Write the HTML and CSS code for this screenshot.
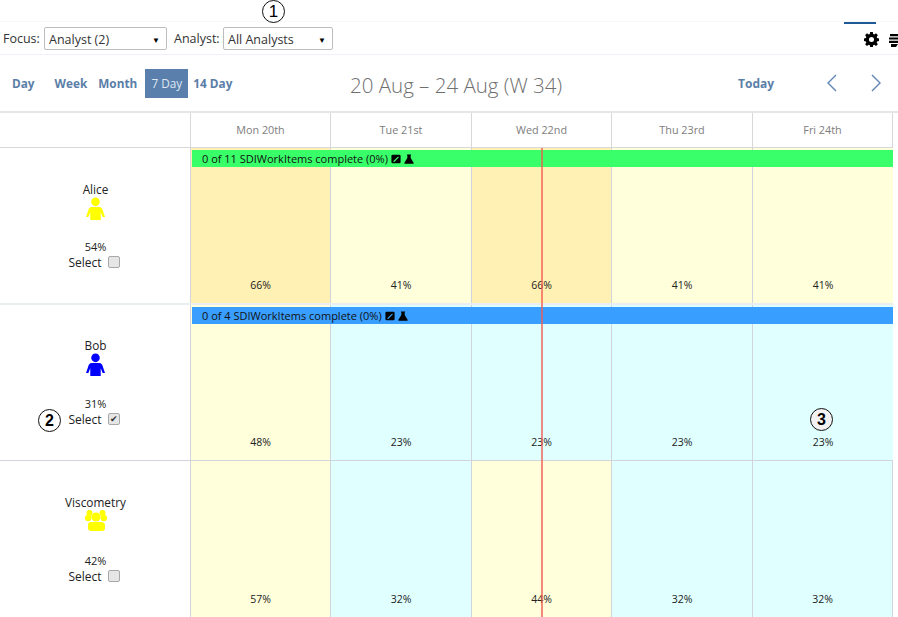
FILE: index.html
```html
<!DOCTYPE html>
<html lang="en">
<head>
<meta charset="utf-8">
<title>Schedule</title>
<link rel="stylesheet" href="styles.css">
</head>
<body>
<div class="page">
  <div class="topbar">
    <span class="callout callout-one">1</span>
    <span class="tab-mark"></span>
  </div>
  <div class="toolbar">
    <div class="filters">
      <span class="flabel">Focus:</span>
      <span class="sel sel-focus"><span>Analyst (2)</span><i>▼</i></span>
      <span class="flabel flabel-gap">Analyst:</span>
      <span class="sel sel-analyst"><span>All Analysts</span><i>▼</i></span>
    </div>
    <div class="tools">
      <svg class="gear" viewBox="0 0 16 16"><path fill="#000" fill-rule="evenodd" d="M6.600 0h2.800l.4 2.200 1.200.5L12.800 1.400l2 2-1.300 1.800.5 1.200 2 .4v2.800l-2 .4-.5 1.200 1.300 1.800-2 2-1.800-1.300-1.200.5-.4 2H6.600l-.4-2-1.200-.5-1.800 1.300-2-2 1.300-1.800-.5-1.200-2-.4V6.800l2-.4.5-1.200L1.200 3.400l2-2L5 2.700l1.200-.5zM8 5.300a2.700 2.700 0 1 0 0 5.400 2.700 2.700 0 0 0 0-5.400z"/></svg>
      <svg class="list" viewBox="0 0 14 14"><path fill="#000" d="M1 1h13v2.200H1zM0 4.400h14v2.200H0zM0 7.800h14V10H0zM2 11h7l-2 3H2z"/></svg>
    </div>
  </div>
  <div class="nav">
    <div class="views">
      <a class="view view-day">Day</a>
      <a class="view view-week">Week</a>
      <a class="view view-month">Month</a>
      <a class="view view-on">7 Day</a>
      <a class="view view-14">14 Day</a>
    </div>
    <div class="range">20 Aug – 24 Aug (W 34)</div>
    <div class="pager">
      <a class="today">Today</a>
      <svg class="chev" viewBox="0 0 12 18"><path d="M10 1 2 9l8 8" fill="none" stroke="#5f86b5" stroke-width="1.400"/></svg>
      <svg class="chev" viewBox="0 0 12 18"><path d="M2 1l8 8-8 8" fill="none" stroke="#5f86b5" stroke-width="1.400"/></svg>
    </div>
  </div>
  <div class="cal">
    <div class="head">
      <div class="hcell hcell-blank"></div>
      <div class="hcell">Mon 20th</div>
      <div class="hcell">Tue 21st</div>
      <div class="hcell">Wed 22nd</div>
      <div class="hcell">Thu 23rd</div>
      <div class="hcell">Fri 24th</div>
    </div>
    <div class="row row-a">
      <div class="who">
        <div class="name">Alice</div>
        <svg class="person" viewBox="0 0 20 24"><circle cx="10" cy="5" r="4.500" fill="#ffff00"/><path fill="#ffff00" d="M6 10.500h8c2 0 3 1.500 3.500 3l2.500 7.500h-2.500L15.500 16v8h-11v-8L2.500 21H0l2.500-7.500c.5-1.500 1.500-3 3.500-3z"/></svg>
        <div class="pct">54%</div>
        <label class="pick">Select<span class="box"></span></label>
      </div>
      <div class="day d-orange"><span>66%</span></div>
      <div class="day d-yellow"><span>41%</span></div>
      <div class="day d-orange"><span>66%</span></div>
      <div class="day d-yellow"><span>41%</span></div>
      <div class="day d-yellow"><span>41%</span></div>
      <div class="bar bar-green"><span>0 of 11 SDIWorkItems complete (0%)</span>
        <svg class="ico" viewBox="0 0 12 12"><path fill="#000" fill-rule="evenodd" d="M2 1h8a1.500 1.500 0 0 1 1.500 1.500v7A1.500 1.500 0 0 1 10 11H2A1.500 1.500 0 0 1 .5 9.500v-7A1.500 1.500 0 0 1 2 1zm6.500 2L3 8.500V9.500h1L9.500 4z"/></svg>
        <svg class="ico" viewBox="0 0 12 12"><path fill="#000" d="M3.500.5h5v1H8v3.200l3.500 5.800c.3.600 0 1.200-.7 1.200H1.200c-.7 0-1-.6-.7-1.200L4 4.700V1.500h-.5z"/></svg>
      </div>
    </div>
    <div class="row row-b">
      <div class="who">
        <div class="name">Bob</div>
        <svg class="person" viewBox="0 0 20 24"><circle cx="10" cy="5" r="4.500" fill="#0000ff"/><path fill="#0000ff" d="M6 10.500h8c2 0 3 1.500 3.500 3l2.500 7.500h-2.500L15.500 16v8h-11v-8L2.500 21H0l2.500-7.500c.5-1.500 1.500-3 3.500-3z"/></svg>
        <div class="pct">31%</div>
        <label class="pick">Select<span class="box box-on">✔</span></label>
        <span class="callout callout-two">2</span>
      </div>
      <div class="day d-yellow"><span>48%</span></div>
      <div class="day d-cyan"><span>23%</span></div>
      <div class="day d-cyan"><span>23%</span></div>
      <div class="day d-cyan"><span>23%</span></div>
      <div class="day d-cyan"><span>23%</span><b class="callout callout-three">3</b></div>
      <div class="bar bar-blue"><span>0 of 4 SDIWorkItems complete (0%)</span>
        <svg class="ico" viewBox="0 0 12 12"><path fill="#000" fill-rule="evenodd" d="M2 1h8a1.500 1.500 0 0 1 1.500 1.500v7A1.500 1.500 0 0 1 10 11H2A1.500 1.500 0 0 1 .5 9.500v-7A1.500 1.500 0 0 1 2 1zm6.500 2L3 8.500V9.500h1L9.500 4z"/></svg>
        <svg class="ico" viewBox="0 0 12 12"><path fill="#000" d="M3.500.5h5v1H8v3.200l3.500 5.800c.3.600 0 1.200-.7 1.200H1.200c-.7 0-1-.6-.7-1.200L4 4.700V1.500h-.5z"/></svg>
      </div>
    </div>
    <div class="row row-c">
      <div class="who">
        <div class="name">Viscometry</div>
        <svg class="person" viewBox="0 0 22 21"><g fill="#ffff00"><circle cx="4.500" cy="3" r="3"/><circle cx="17.500" cy="3" r="3"/><circle cx="3.200" cy="8" r="3.200"/><circle cx="18.800" cy="8" r="3.200"/><circle cx="11" cy="7" r="4.500"/><path d="M6 12h10c2 0 4 1 4 3v3c0 1.700-1.300 3-3 3H6c-1.700 0-3-1.300-3-3v-3c0-2 1-3 3-3z"/></g></svg>
        <div class="pct">42%</div>
        <label class="pick">Select<span class="box"></span></label>
      </div>
      <div class="day d-yellow"><span>57%</span></div>
      <div class="day d-cyan"><span>32%</span></div>
      <div class="day d-yellow"><span>44%</span></div>
      <div class="day d-cyan"><span>32%</span></div>
      <div class="day d-cyan"><span>32%</span></div>
    </div>
    <div class="nowline"></div>
  </div>
</div>
</body>
</html>
```
FILE: styles.css
```css
* { box-sizing: border-box; }
html, body { margin: 0; padding: 0; }
body {
  width: 898px;
  height: 617px;
  overflow: hidden;
  background: #fff;
  font-family: "Open Sans", "Noto Sans", "Liberation Sans", sans-serif;
  font-size: 11px;
  color: #222;
}
.page { position: relative; width: 898px; height: 617px; overflow: hidden; }

.topbar { position: relative; height: 22px; border-bottom: 1px solid #f6f8fa; }
.tab-mark { position: absolute; left: 844px; top: 22px; width: 32px; height: 2px; background: #1f5a96; }

.callout {
  position: absolute;
  width: 23px;
  height: 23px;
  border: 1px solid #111;
  border-radius: 50%;
  background: #fff;
  color: #000;
  font-family: "Liberation Sans", sans-serif;
  font-size: 17px;
  font-weight: 400;
  line-height: 21px;
  text-align: center;
}
.callout-one { left: 262px; top: 0; }
.callout-two { left: 38px; top: 104px; font-weight: 700; font-size: 16px; }
.callout-three { background: #f2f2f2; font-weight: 700; font-size: 16px; }

.toolbar {
  height: 33px;
  display: flex;
  align-items: center;
  justify-content: space-between;
  border-bottom: 1px solid #eef2f6;
  padding-left: 3px;
}
.filters { display: flex; align-items: center; }
.flabel { width: 41px; font-size: 12.500px; color: #333; white-space: nowrap; }
.flabel-gap { width: 49px; margin-left: 7px; }
.sel {
  display: flex;
  align-items: center;
  justify-content: space-between;
  height: 23px;
  padding: 2px 4px 0;
  border: 1px solid #bdbdbd;
  border-radius: 2px;
  font-size: 12.500px;
  color: #333;
}
.sel i { font-style: normal; font-size: 8px; color: #000; margin-right: 2px; }
.sel-focus { width: 123px; }
.sel-analyst { width: 110px; }
.tools { display: flex; align-items: center; gap: 10px; margin-top: 3px; margin-right: -5px; }
.gear { width: 15px; height: 15px; display: block; }
.list { width: 14px; height: 14px; display: block; }

.nav {
  height: 58px;
  display: flex;
  align-items: center;
  border-bottom: 2px solid #e6e6e6;
}
.views { flex: none; width: 304px; display: flex; align-items: center; padding-left: 12px; }
.view { font-size: 11.800px; font-weight: 700; color: #5b7ea8; white-space: nowrap; }
.view-week { margin-left: 20px; }
.view-month { margin-left: 11px; }
.view-on {
  margin-left: 8px;
  width: 43px;
  height: 29px;
  line-height: 29px;
  text-align: center;
  font-weight: 400;
  color: #dfe8f2;
  background: #5a7fac;
}
.view-14 { margin-left: 5px; }
.range { flex: none; width: 300px; padding-top: 3px; text-align: center; font-size: 20.500px; font-weight: 300; color: #6f6f6f; margin-left: 2px; white-space: nowrap; }
.pager { flex: 1; display: flex; align-items: center; padding-left: 132px; }
.today { font-size: 12px; font-weight: 700; color: #5b7ea8; width: 88px; flex: none; }
.chev { width: 12px; height: 18px; display: block; flex: none; margin-right: 32px; }
.chev:last-child { margin-right: 0; }

.cal { position: relative; width: 893px; }
.head, .row {
  display: grid;
  grid-template-columns: 190px 140px 141px 140px 141px 141px;
}
.hcell {
  height: 35px;
  line-height: 33px;
  text-align: center;
  color: #7d7d7d;
  font-size: 10.800px;
  border-left: 1px solid #d8d8d8;
  border-bottom: 1px solid #d8d8d8;
}
.hcell-blank { border-left: 0; }
.hcell:last-child { border-right: 1px solid #d8d8d8; }

.row { position: relative; }
.row-a { height: 157px; border-bottom: 2px solid #e9eef0; }
.row-b { height: 156px; border-bottom: 1px solid #d3d3de; }
.row-c { height: 156px; }
.who {
  position: relative;
  display: flex;
  flex-direction: column;
  align-items: center;
  padding: 34px 0 0 1px;
}
.row-b .who { padding-top: 33px; }
.name { font-size: 11.800px; line-height: 14px; color: #222; }
.person { width: 19px; height: 23px; display: block; margin-top: 1px; }
.row-c .person { width: 22px; height: 21px; margin-top: 1px; }
.pct { font-size: 11px; line-height: 14px; margin-top: 20px; }
.row-b .pct { margin-top: 21px; }
.row-c .pct { margin-top: 23px; }
.pick { display: flex; align-items: center; font-size: 12px; line-height: 16px; margin-top: 1px; margin-left: -3px; }
.box {
  width: 12px;
  height: 12px;
  margin: -3px 0 0 6px;
  border: 1px solid #a8a8a8;
  border-radius: 2px;
  background: #e6e6e6;
  font-size: 9px;
  line-height: 10px;
  text-align: center;
  color: #333;
}
.day {
  position: relative;
  border-left: 1px solid #d3d3de;
  display: flex;
  align-items: flex-end;
  justify-content: center;
  padding-bottom: 11px;
  font-size: 10.500px;
  color: #222;
}
.day span { line-height: 14px; }
.day:last-of-type { border-right: 1px solid #d3d3de; }
.d-orange { background: #fff1b3; }
.d-yellow { background: #ffffdc; }
.d-cyan { background: #e0ffff; }
.callout-three { left: 57px; top: 103px; }
.bar {
  position: absolute;
  left: 192px;
  top: 2px;
  width: 701px;
  height: 17px;
  padding-left: 10px;
  display: flex;
  align-items: center;
  gap: 3px;
  font-size: 11px;
  line-height: 17px;
  color: #111;
  white-space: nowrap;
}
.bar-green { background: rgba(51, 255, 102, .97); }
.bar-blue { background: rgba(51, 155, 255, .97); }
.ico { width: 10px; height: 10px; display: block; flex: none; }
.nowline {
  position: absolute;
  left: 541px;
  top: 35px;
  width: 2px;
  height: 470px;
  background: rgba(240, 90, 80, .7);
}
```
